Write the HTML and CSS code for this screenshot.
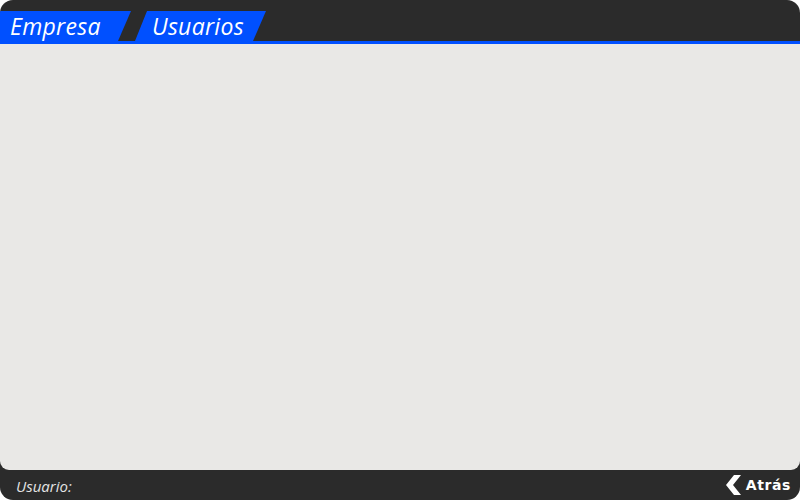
FILE: index.html
```html
<!DOCTYPE html>
<html>
<head>
<meta charset="utf-8">
<link rel="stylesheet" href="styles.css">
</head>
<body>
<div class="app">
  <div class="tabs">
    <div class="tab tab-first">Empresa</div>
    <div class="tab tab-second">Usuarios</div>
  </div>
  <div class="content"></div>
  <div class="footer">
    <span class="user">Usuario:</span>
    <span class="back">
      <svg width="20" height="22" viewBox="0 0 20 22"><polygon points="10,1 17,1 9,11 17,21 10,21 2,11" fill="#ffffff"/></svg>
      <span class="back-label">Atrás</span>
    </span>
  </div>
</div>
</body>
</html>
```
FILE: styles.css
```css
html, body { margin: 0; padding: 0; background: #ffffff; }
.app {
  width: 800px; height: 500px;
  background: #2b2b2b;
  border-radius: 13px;
  display: flex; flex-direction: column;
  overflow: hidden;
  font-family: "Open Sans", sans-serif;
}
.tabs {
  height: 30px;
  margin-top: 11px;
  display: flex;
  border-bottom: 3px solid #0050ff;
}
.tab {
  height: 30px;
  background: #0050ff;
  color: #ffffff;
  font-style: italic;
  font-weight: 400;
  font-size: 23px;
  letter-spacing: 0.3px;
  line-height: 30px;
  box-sizing: border-box;
}
.tab-first {
  width: 131px;
  padding-left: 10px;
  clip-path: polygon(0 0, 131px 0, 118px 30px, 0 30px);
}
.tab-second {
  width: 131px;
  margin-left: 4px;
  padding-left: 17px;
  clip-path: polygon(12px 0, 131px 0, 118px 30px, 0 30px);
}
.content {
  flex: 1;
  background: #e9e8e6;
  border-radius: 0 0 9px 9px;
}
.footer {
  height: 30px;
  display: flex; align-items: center; justify-content: space-between;
  padding: 0 9px 0 16px;
}
.user {
  color: #e4e4e4;
  font-style: italic;
  font-weight: 400;
  font-size: 15px;
  margin-top: 1px;
}
.back { display: flex; align-items: center; gap: 2px; color: #ffffff; }
.back-label {
  font-family: "DejaVu Sans", sans-serif;
  font-weight: bold;
  font-size: 14px;
  letter-spacing: 0.6px;
}
```
